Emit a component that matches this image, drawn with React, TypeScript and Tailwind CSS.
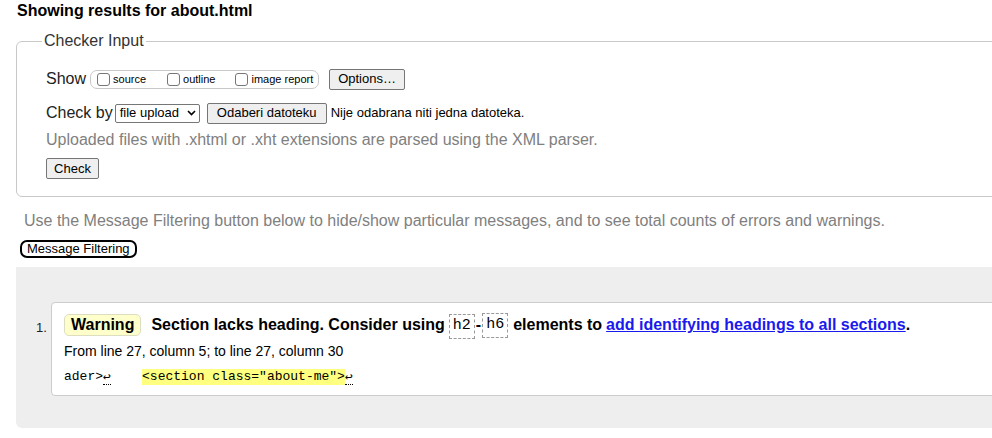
import React from "react";

const sans = "font-['Liberation_Sans',Arial,sans-serif]";
const mono = "font-['Liberation_Mono','DejaVu_Sans_Mono',monospace]";

function Box({ label }: { label: string }) {
  return (
    <span className="flex items-center">
      <span className="inline-block w-[13px] h-[13px] border border-[#767676] rounded-[3px] bg-white" />
      <span className="ml-[3px] text-[11px] leading-[13px] text-black">{label}</span>
    </span>
  );
}

function Btn({ children, className = "" }: { children: React.ReactNode; className?: string }) {
  return (
    <span
      className={`inline-flex items-center justify-center bg-[#efefef] border border-[#767676] rounded-[2px] text-[13px] text-black ${className}`}
    >
      {children}
    </span>
  );
}

function Code({ children }: { children: React.ReactNode }) {
  return (
    <span className={`${mono} font-normal inline-flex items-center h-[25px] px-[3px] border border-dashed border-[#999] text-[15px] text-black`}>
      {children}
    </span>
  );
}

function Eol() {
  return (
    <span className="font-['DejaVu_Sans_Mono',monospace] border-b border-dotted border-black leading-[15px] text-[13px]">
      ↩
    </span>
  );
}

export default function App() {
  return (
    <div className={`${sans} w-[992px] h-[438px] overflow-hidden bg-white`}>
      <div className="w-[1030px] pl-[16px]">
        <h2 className="pt-[2px] pl-[1px] text-[16px] leading-[18px] font-bold text-black">
          Showing results for about.html
        </h2>

        <fieldset className="mt-[12px] border border-[#c8c8c8] rounded-l-[6px] pl-[29px] pb-[16px]">
          <legend className="ml-[-4px] px-[2px] text-[16px] leading-[18px] text-[#333]">Checker Input</legend>

          <div className="mt-[18px] flex items-center h-[22px]">
            <span className="text-[16px] text-[#222]">Show</span>
            <span className="ml-[4px] flex items-center h-[19px] w-[229px] pl-[6px] border border-[#c8c8c8] rounded-[7px]">
              <Box label="source" />
              <span className="w-[21px]" />
              <Box label="outline" />
              <span className="w-[20px]" />
              <Box label="image report" />
            </span>
            <Btn className="ml-[10px] w-[76px] h-[21px] text-[13px]">Options…</Btn>
          </div>

          <div className="mt-[12px] flex items-center h-[22px]">
            <span className="text-[16px] text-[#222]">Check by</span>
            <span className="ml-[2px] flex items-center h-[19px] w-[85px] pl-[4px] pr-[3px] border border-[#767676] rounded-[2px] bg-white text-[13px] text-black">
              <span className="flex-1">file upload</span>
              <svg width="9" height="6" viewBox="0 0 9 6">
                <path d="M1 1 L4.5 4.5 L8 1" fill="none" stroke="#000" strokeWidth="1.6" />
              </svg>
            </span>
            <Btn className="ml-[7px] w-[120px] h-[21px]">Odaberi datoteku</Btn>
            <span className="ml-[4px] text-[13px] text-black">Nije odabrana niti jedna datoteka.</span>
          </div>

          <p className="mt-[7px] text-[16px] leading-[18px] text-[#808080]">
            Uploaded files with .xhtml or .xht extensions are parsed using the XML parser.
          </p>

          <Btn className="mt-[9px] w-[53px] h-[21px]">Check</Btn>
        </fieldset>

        <p className="mt-[15px] pl-[8px] text-[16px] leading-[18px] text-[#808080]">
          Use the Message Filtering button below to hide/show particular messages, and to see total counts of errors and warnings.
        </p>

        <div className="mt-[10px] ml-[4px] inline-flex items-center h-[18px] px-[5px] border-2 border-black rounded-[7px] text-[13px] leading-[14px] text-black">
          Message Filtering
        </div>

        <div className="mt-[7px] h-[161px] bg-[#eeeeee] rounded-bl-[6px] pt-[35px] pl-[35px]">
          <ol className="relative">
            <li className="relative bg-white border border-[#cccccc] rounded-l-[4px] h-[94px] pl-[12px] pt-[10px]">
              <span className="absolute left-[-16px] top-[15px] text-[13px] text-[#222]">1.</span>
              <div className="flex items-center h-[25px] text-[16px] font-bold text-black whitespace-nowrap">
                <span className="inline-flex items-center h-[22px] px-[6px] bg-[#ffffcc] border border-[#ddddc0] rounded-[5px]">
                  Warning
                </span>
                <span className="ml-[10px]">Section lacks heading. Consider using</span>
                <span className="ml-[4px]"><Code>h2</Code></span>
                <span className="mx-[1px]">-</span>
                <Code>h6</Code>
                <span className="ml-[5px]">elements to</span>
                <a className="ml-[4px] text-[#1a1aee] underline">add identifying headings to all sections</a>
                <span>.</span>
              </div>
              <div className="mt-[5px] text-[14px] leading-[16px] text-black">
                From line 27, column 5; to line 27, column 30
              </div>
              <div className={`${mono} mt-[10px] text-[13px] leading-[16px] text-black whitespace-pre flex items-center`}>
                <span>ader&gt;</span>
                <Eol />
                <span>    </span>
                <span className="bg-[#ffff80]">&lt;section class="about-me"&gt;</span>
                <Eol />
              </div>
            </li>
          </ol>
        </div>
      </div>
    </div>
  );
}
